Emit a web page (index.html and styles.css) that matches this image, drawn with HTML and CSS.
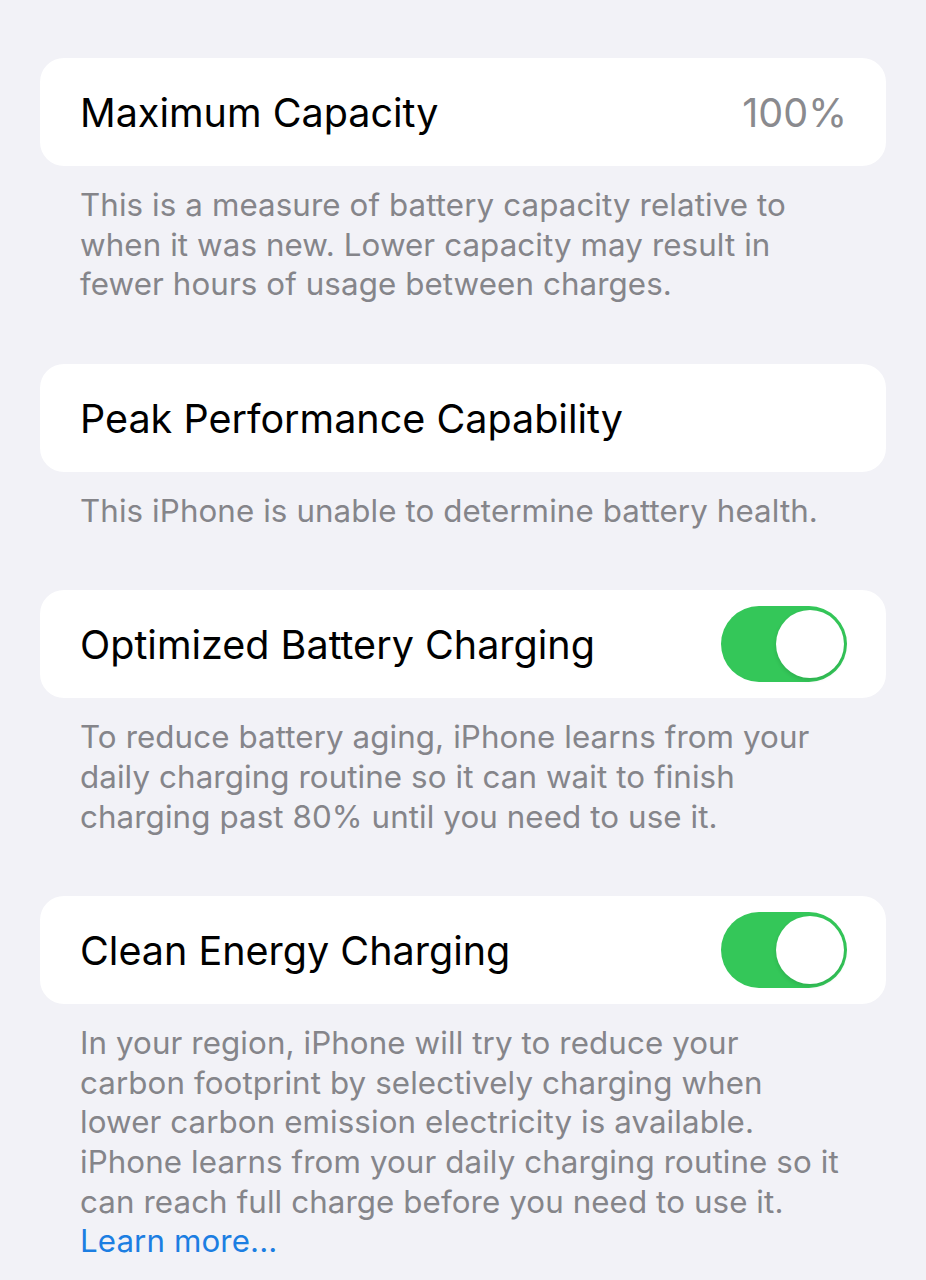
FILE: index.html
```html
<!DOCTYPE html>
<html>
<head>
<meta charset="utf-8">
<link rel="stylesheet" href="styles.css">
</head>
<body>
<div class="page">
  <div class="card">
    <span class="label">Maximum Capacity</span>
    <span class="value">100%</span>
  </div>
  <p class="note">This is a measure of battery capacity relative to<br>when it was new. Lower capacity may result in<br>fewer hours of usage between charges.</p>

  <div class="card">
    <span class="label">Peak Performance Capability</span>
  </div>
  <p class="note">This iPhone is unable to determine battery health.</p>

  <div class="card">
    <span class="label">Optimized Battery Charging</span>
    <span class="toggle"><span class="knob"></span></span>
  </div>
  <p class="note">To reduce battery aging, iPhone learns from your<br>daily charging routine so it can wait to finish<br>charging past 80% until you need to use it.</p>

  <div class="card">
    <span class="label">Clean Energy Charging</span>
    <span class="toggle"><span class="knob"></span></span>
  </div>
  <p class="note">In your region, iPhone will try to reduce your<br>carbon footprint by selectively charging when<br>lower carbon emission electricity is available.<br>iPhone learns from your daily charging routine so it<br>can reach full charge before you need to use it.<br><a class="link">Learn more...</a></p>
</div>
</body>
</html>
```
FILE: styles.css
```css
html, body {
  margin: 0;
  padding: 0;
  background: #f2f2f7;
}
body {
  font-family: Inter, "Noto Sans", "Liberation Sans", sans-serif;
  -webkit-font-smoothing: antialiased;
}
.page {
  padding: 58px 40px 0 40px;
  display: flex;
  flex-direction: column;
}
.card {
  background: #ffffff;
  border-radius: 24px;
  height: 108px;
  box-sizing: border-box;
  padding: 2px 39px 0 40px;
  display: flex;
  align-items: center;
  justify-content: space-between;
}
.label {
  font-size: 39.5px;
  color: #000;
  letter-spacing: 0;
}
.value {
  font-size: 39.5px;
  color: #8a8a8e;
  letter-spacing: 0;
}
.note {
  margin: 20px 0 59px 0;
  padding: 0 10px 0 40px;
  font-size: 31.3px;
  line-height: 39.6px;
  color: #85858a;
  letter-spacing: 0.1px;
  white-space: nowrap;
}
.link {
  color: #1c7ee2;
}
.toggle {
  width: 126px;
  height: 76px;
  border-radius: 38px;
  background: #34c759;
  display: flex;
  align-items: center;
  justify-content: flex-end;
  padding: 0 3px;
  box-sizing: border-box;
  margin-top: -2px;
}
.knob {
  width: 68px;
  height: 68px;
  border-radius: 50%;
  background: #fff;
  box-shadow: 0 2px 4px rgba(0,0,0,0.12);
}
```
